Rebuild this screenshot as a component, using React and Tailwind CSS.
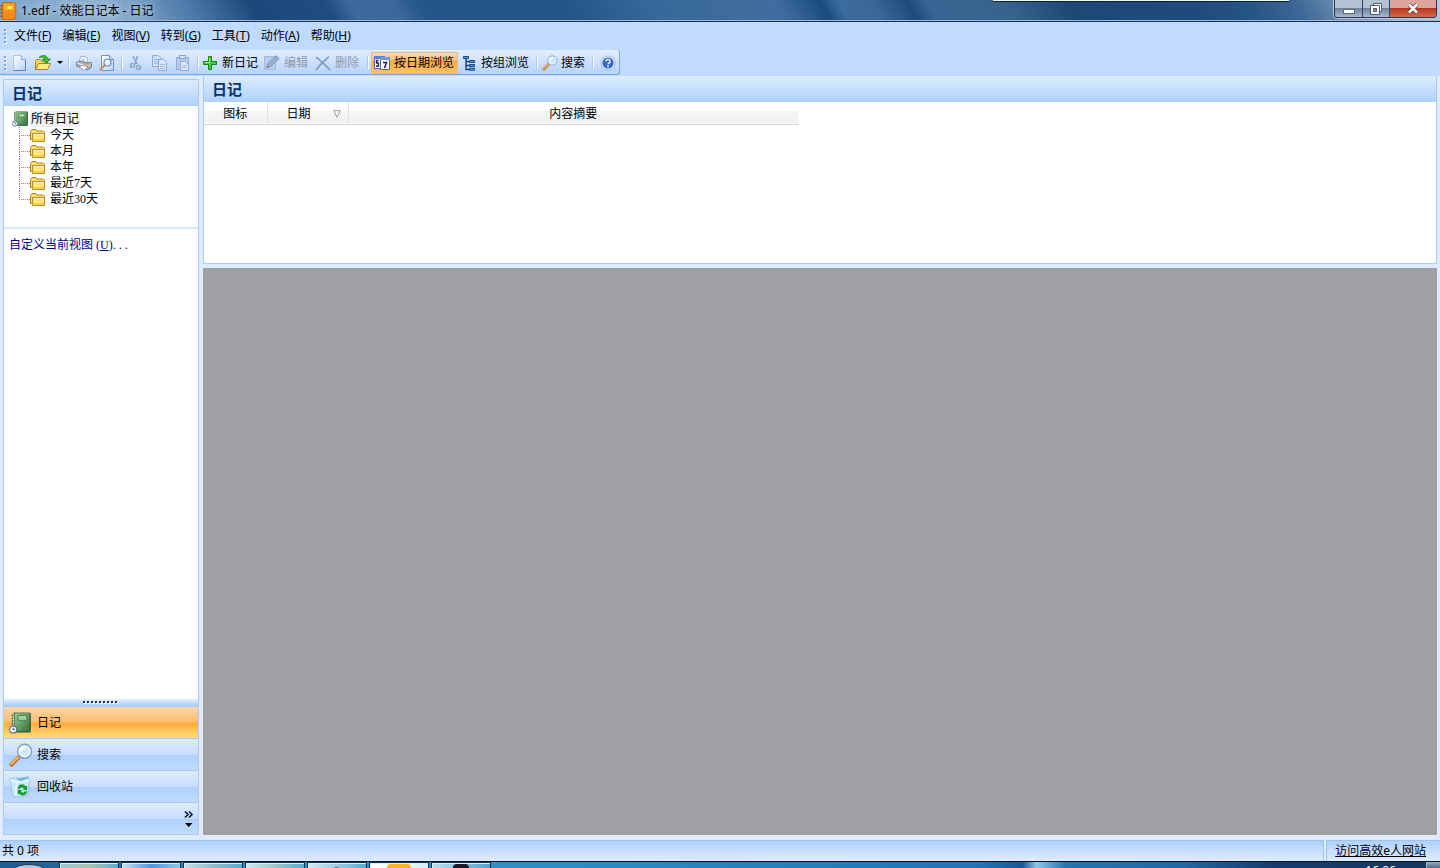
import React from "react";

const sans = "font-['Noto_Sans','Noto_Sans_CJK_SC',sans-serif]";
const serifDigits = "font-['Liberation_Serif','Noto_Sans_CJK_SC',serif]";

function Svg({ size = 16, children, className = "" }) {
  return (
    <svg width={size} height={size} viewBox="0 0 16 16" aria-hidden="true" className={`shrink-0 ${className}`}>
      {children}
    </svg>
  );
}

const NewIcon = () => (
  <Svg>
    <defs>
      <linearGradient id="pg" x1="0" y1="0" x2="1" y2="1">
        <stop offset="0" stopColor="#fff" />
        <stop offset="1" stopColor="#b4d2f5" />
      </linearGradient>
    </defs>
    <path d="M1.500 .5h8l4 4v11h-12z" fill="url(#pg)" stroke="#b0c6e6" />
    <path d="M9.500 .5v4h4" fill="#cfe2fb" stroke="#8ea8cf" />
    <path d="M1.500 15.500h12V5" fill="none" stroke="#6680ae" />
  </Svg>
);

const OpenIcon = () => (
  <Svg>
    <path d="M.5 14.500V5.500l1-1h4l1 1.500h6v3" fill="#f3d46a" stroke="#a98420" />
    <path d="M.5 14.500l3-6h12l-3 6z" fill="#ffe792" stroke="#a98420" />
    <path d="M4 2.500C7-.5 12-.3 13 4h2.500L11 8.500 7.500 4.500h2.300C9 2.300 6.500 1.800 4 2.500z" fill="#3fbe2d" stroke="#167a12" strokeWidth=".7" />
  </Svg>
);

const PrintIcon = () => (
  <Svg>
    <path d="M3 7l2-6 6 1.500L12 8z" fill="#fff" stroke="#8b99b4" strokeWidth=".8" />
    <path d="M5.500 4l4 1M5 5.500l4 1" stroke="#9aaac2" strokeWidth=".8" />
    <path d="M.5 7.500L4 6l8 2 3.500-.5v4.500l-4 3-11-4z" fill="#aeb3c0" stroke="#666b7a" strokeWidth=".8" />
    <path d="M1 8l10.500 3.500L15 8.500" fill="none" stroke="#f4f6fa" />
    <path d="M3 12l4-2 5 2-4 3.500z" fill="#fff" stroke="#7c8393" strokeWidth=".8" />
    <path d="M12 9.500h2" stroke="#f2a93c" strokeWidth="1.500" />
  </Svg>
);

const PreviewIcon = () => (
  <Svg>
    <path d="M2.500 .5h8l4 4v11h-12z" fill="url(#pg)" stroke="#7790bd" />
    <path d="M10.500 .5v4h4" fill="#c9ddf9" stroke="#7790bd" />
    <path d="M6 10L1.500 14.500" stroke="#d98a48" strokeWidth="2" strokeLinecap="round" />
    <circle cx="8.500" cy="7.500" r="3.500" fill="#e7f6ff" stroke="#5f83bb" strokeWidth="1.200" />
  </Svg>
);

const CutIcon = () => (
  <Svg>
    <path d="M4 1l4 8M8.500 1L6 9" stroke="#8aa3cc" strokeWidth="1.500" fill="none" />
    <circle cx="3.500" cy="10.500" r="2" fill="none" stroke="#8fa6cb" strokeWidth="1.500" />
    <circle cx="9.500" cy="12.500" r="2" fill="none" stroke="#8fa6cb" strokeWidth="1.500" />
  </Svg>
);

const CopyIcon = () => (
  <Svg>
    <path d="M.5 .5h6l3 3v8h-9z" fill="#cfe0fa" stroke="#93abd2" />
    <path d="M2 4.500h5M2 6.500h5M2 8.500h4" stroke="#a5badb" />
    <path d="M6.500 4.500h5l3 3v8h-8z" fill="#d7e6fc" stroke="#93abd2" />
    <path d="M8 9.500h5M8 11.500h5M8 13.500h5" stroke="#a5badb" />
  </Svg>
);

const PasteIcon = () => (
  <Svg>
    <path d="M1.500 2.500h12v12h-12z" fill="#b5cbed" stroke="#93abd2" />
    <path d="M4.500 .5h6v3h-6z" fill="#d5e4fa" stroke="#8ba3ca" />
    <path d="M5.500 6.500h5l3 3v6h-8z" fill="#dce9fd" stroke="#93abd2" />
    <path d="M7 10.500h5M7 12.500h5" stroke="#a5badb" />
  </Svg>
);

const PlusIcon = () => (
  <Svg>
    <path d="M5.500 1.500h3v5h5v3h-5v5h-3v-5h-5v-3h5z" fill="#43cf35" stroke="#11830f" strokeLinejoin="round" />
    <path d="M6.500 3v4.500H2" fill="none" stroke="#a0f090" />
  </Svg>
);

const EditIcon = () => (
  <Svg>
    <path d="M.5 1.500h11v13H.5z" fill="#b7cbea" stroke="#a5badb" />
    <path d="M2.500 12.500l1.500-4L12 .8 15.200 3.500 7 11z" fill="#98add0" stroke="#8097bd" />
    <path d="M2.500 12.500l3.500-1.200" stroke="#6c84ad" strokeWidth="1.300" />
  </Svg>
);

const DeleteIcon = () => (
  <Svg>
    <path d="M1.500 2.500c4 3 8 7 13 12M13.500 2C9 6 5 9.500 1.500 14.500" stroke="#8499c0" strokeWidth="1.600" fill="none" strokeLinecap="round" />
  </Svg>
);

const DateIcon = () => (
  <Svg>
    <path d="M.5 1.500h10v12H.5z" fill="#fff" stroke="#4a64a8" />
    <path d="M0 1h11v3H0z" fill="#5c80cc" />
    <path d="M4.500 5.500h-2v2.500h2v3h-2.500" fill="none" stroke="#1d2440" strokeWidth="1.300" />
    <path d="M6.500 2.500h9v12h-9z" fill="#f3f7ff" stroke="#4a64a8" />
    <path d="M6 2h10v3H6z" fill="#7396de" />
    <path d="M9 7.500h3.500l-2 5.500" fill="none" stroke="#1d2440" strokeWidth="1.500" />
  </Svg>
);

const GroupIcon = () => (
  <Svg>
    <path d="M4 3v11.500h4M4 6.500h4M4 10.500h4" fill="none" stroke="#17406f" strokeWidth="1.400" />
    <path d="M1.500 1.500h5v2h-5zM7.500 5.500h5v2h-5zM7.500 9.500h5v2h-5zM7.500 13.200h5v2h-5z" fill="#5b9be0" stroke="#174a84" />
  </Svg>
);

const SearchIcon = ({ size = 16 }) => (
  <Svg size={size}>
    <path d="M6.200 9.800L1.700 14.300" stroke="#b4743a" strokeWidth="2.800" strokeLinecap="round" />
    <path d="M6 9.600L1.500 14" stroke="#f3ad62" strokeWidth="1.600" strokeLinecap="round" />
    <circle cx="10.400" cy="5.500" r="4.600" fill="#cdebff" stroke="#7f9ecb" strokeWidth="1" />
    <circle cx="10.400" cy="5.500" r="3.700" fill="none" stroke="#fff" strokeWidth=".7" />
    <path d="M8 5.500a2.600 2.600 0 0 1 3-2.600" fill="none" stroke="#fff" strokeWidth="1.200" />
  </Svg>
);

const HelpIcon = () => (
  <Svg>
    <circle cx="8" cy="8" r="7" fill="#eef4ff" stroke="#a6b6d4" />
    <circle cx="8" cy="8" r="5.600" fill="#3568c4" />
    <path d="M6 6.500a2 2 0 1 1 3 1.600c-.8.500-1 .8-1 1.400" fill="none" stroke="#fff" strokeWidth="1.400" />
    <circle cx="8" cy="11.300" r=".9" fill="#fff" />
  </Svg>
);

const BookIcon = ({ size = 16 }) => (
  <Svg size={size}>
    <defs>
      <linearGradient id="bk" x1="0" y1="0" x2="1" y2="1">
        <stop offset="0" stopColor="#9bcf98" />
        <stop offset="1" stopColor="#2f7038" />
      </linearGradient>
    </defs>
    <path d="M2.500 1.500L4.500.500v13l-2 1z" fill="#e4efe4" stroke="#628b64" strokeWidth=".6" />
    <path d="M4 .7h11.300v13.600H4z" fill="url(#bk)" stroke="#47774c" strokeWidth=".6" />
    <path d="M15.400 1v13.500H4.500" fill="none" stroke="#24502b" strokeWidth=".7" />
    <path d="M6.500 2.500h6.500v3.500H6.500z" fill="#a5d39d" stroke="#3c7a42" strokeWidth=".6" />
    <path d="M2 2.500h1.500M2 4.500h1.500M2 6.500h1.500M2 8.500h1.500" stroke="#45654a" strokeWidth=".7" />
    <circle cx="3" cy="12.700" r="2.600" fill="#f2f5fa" stroke="#596989" strokeWidth=".8" />
    <path d="M3 11.300v1.500h1.200" fill="none" stroke="#303a55" strokeWidth=".7" />
  </Svg>
);

const FolderIcon = () => (
  <Svg>
    <path d="M.5 12.500V4.500l1.500-2h4l1 1.500h6.500l1 1.500v7z" fill="#f8dc7c" stroke="#a97e16" />
    <path d="M2.500 14.500v-8h12v8z" fill="#ffe584" stroke="#bd8f1d" />
    <path d="M3.500 7.500h10" stroke="#fff6c8" />
    <path d="M3 12h11v2H3z" fill="#f7cf55" />
  </Svg>
);

const BinIcon = ({ size = 16 }) => (
  <Svg size={size}>
    <path d="M.5 2L6 1.300l2.500.4L14 .4l-.3 1.800 1.500.6-1.700 11.500-8.800 1-2-1.500z" fill="#c9eaf8" stroke="#8cc3df" strokeWidth=".6" />
    <path d="M5 2l4 2 5-2.700L13.700.6z" fill="#74b7e7" />
    <path d="M1 2.800l4.500 1.700 9.500-1.300M5.500 4.500l-.5 10" fill="none" stroke="#f5fcff" strokeWidth=".8" />
    <path d="M6.300 9.200c.2-3.600 4.500-4 5.900-1.600l1.100-.7-.2 3.600-3.400-.8 1.100-.7c-1-1-2.400-.9-2.800.4z" fill="#169d2f" />
    <path d="M13.200 11.200c-.4 3.400-4.600 3.700-5.900 1.500l-1.100.7.2-3.600 3.400.8-1.100.7c.9 1.100 2.300 1.100 2.800-.2z" fill="#169d2f" />
  </Svg>
);

const AppIcon = () => (
  <Svg size={18}>
    <rect x="1.500" y=".5" width="12.500" height="15" rx="2" fill="#f58a16" stroke="#c75a0b" strokeWidth=".7" />
    <path d="M3.500 1.500h9v6h-9z" fill="#ffad27" />
    <path d="M6 3h5.500v4H6z" fill="#ffe15a" stroke="#db8610" strokeWidth=".6" />
    <path d="M.2 3.500h2.500M.2 6.500h2.500M.2 9.500h2.500M.2 12.500h2.500" stroke="#8c5d37" strokeWidth="1.200" />
  </Svg>
);

const Grip = () => (
  <svg width="8" height="16" viewBox="0 0 8 16" aria-hidden="true" className="shrink-0">
    {[1, 5, 9, 13].map((y) => (
      <g key={y}>
        <rect x="5" y={y + 1} width="2" height="2" fill="#fff" />
        <rect x="4" y={y} width="2" height="2" fill="#7fa3db" />
      </g>
    ))}
  </svg>
);

const Sep = () => (
  <span className="flex w-[7px] justify-center">
    <span className="h-[13px] w-px bg-[#a9c8f2]" />
    <span className="h-[13px] w-px bg-white" />
  </span>
);

function IconButton({ label, children, disabled }) {
  return (
    <button type="button" aria-label={label} disabled={disabled} className="flex h-[22px] w-[23px] items-center justify-center">
      {children}
    </button>
  );
}

function ToolButton({ icon, children, disabled, active }) {
  const state = active
    ? "border border-[#d9bd9a] bg-[linear-gradient(#fcd9b4,#fdbf7c_35%,#fda542_40%,#fec467)] gap-1 pl-[2px] pr-[3px] mr-[2px]"
    : disabled
      ? "text-[#8f99ab] gap-1 px-[2px] mr-[3px]"
      : "gap-[3px] px-[2px] mr-[2px]";
  return (
    <button
      type="button"
      disabled={disabled}
      aria-pressed={active}
      className={`flex h-[22px] items-center whitespace-nowrap ${state}`}
    >
      {icon}
      <span>{children}</span>
    </button>
  );
}

const menus = [
  ["文件", "F"],
  ["编辑", "E"],
  ["视图", "V"],
  ["转到", "G"],
  ["工具", "T"],
  ["动作", "A"],
  ["帮助", "H"],
];

function TitleBar() {
  return (
    <header className="relative flex h-[22px] shrink-0 justify-between border-b border-[#1b2c4d] bg-[linear-gradient(60deg,#7fa5ca_0px,#8badd0_100px,#4d7aa9_170px,#1d477a_225px,#1f4d80_290px,#3d6a9e_312px,#3a679c_350px,#25558a_372px,#255689_500px,#386899_570px,#3f6d9f_680px,#1c4b7e_720px,#3c6b9d_735px,#3a6798_765px,#1d4b7b_795px,#376492_812px,#38638f_880px,#1d4976_930px,#1d4b7d_1040px,#265684_1090px,#3c6796_1130px,#6e8fb2_1170px,#b5c8dc_1250px)] shadow-[inset_0_-1px_0_#a5bcd6]">
      <h1 className="flex items-center gap-[3px] font-normal">
        <AppIcon />
        <span className="[text-shadow:0_0_6px_#c5d8eb,0_0_10px_#c5d8eb]">1.edf - 效能日记本 - 日记</span>
      </h1>
      <div className="absolute top-0 right-[151px] h-[2px] w-[296px] border-b border-[#12222c] bg-[#eaf6fb]" />
      <div className="mr-[3px] flex h-[18px] overflow-hidden rounded-b-[4px] border border-t-0 border-[#25364e] shadow-[0_0_0_1px_#b9cadd]">
        <button type="button" aria-label="最小化" className="flex w-7 items-center justify-center border-r border-[#34465f] bg-linear-to-b from-[#b4c2d3] from-45% via-[#6c7f99] via-46% to-[#a9bbd0]">
          <svg width="12" height="14" viewBox="0 0 12 14" aria-hidden="true">
            <rect x=".5" y="7.500" width="11" height="4" fill="#fff" stroke="#5a6980" />
          </svg>
        </button>
        <button type="button" aria-label="还原" className="flex w-[27px] items-center justify-center border-r border-[#34465f] bg-linear-to-b from-[#b4c2d3] from-45% via-[#6c7f99] via-46% to-[#a9bbd0]">
          <svg width="12" height="12" viewBox="0 0 12 12" aria-hidden="true">
            <path d="M3.500 .5h8v8h-8z" fill="#fff" stroke="#4c5a6e" />
            <path d="M.5 2.500h9v9h-9z" fill="#fff" stroke="#4c5a6e" />
            <path d="M3.500 5.500h3v3h-3z" fill="#8392a8" stroke="#4c5a6e" />
          </svg>
        </button>
        <button type="button" aria-label="关闭" className="flex w-[46px] items-center justify-center bg-linear-to-b from-[#dda59d] from-45% via-[#b9321c] via-46% to-[#d3694c]">
          <svg width="12" height="11" viewBox="0 0 12 11" aria-hidden="true">
            <path d="M2 1.500l8 8M10 1.500l-8 8" stroke="#5b3438" strokeWidth="4" />
            <path d="M2 1.500l8 8M10 1.500l-8 8" stroke="#fff" strokeWidth="2.500" />
          </svg>
        </button>
      </div>
    </header>
  );
}

function MenuBar() {
  return (
    <nav className="flex h-7 shrink-0 items-center gap-px">
      <Grip />
      {menus.map(([name, key]) => (
        <button key={key} type="button" className="px-[5px] whitespace-nowrap">
          {name}(<u>{key}</u>)
        </button>
      ))}
    </nav>
  );
}

function Toolbar() {
  return (
    <div className="flex h-[26px] shrink-0">
      <div role="toolbar" className="flex h-[25px] items-center rounded-r-[3px] border-r border-b border-[#7ba5e0] bg-linear-to-b from-[#e2eefe] via-[#cde0fd] to-[#b5d3fb] pt-px">
        <Grip />
        <IconButton label="新建"><NewIcon /></IconButton>
        <IconButton label="打开"><OpenIcon /></IconButton>
        <button type="button" aria-label="最近文件" className="flex h-[22px] w-[11px] items-center justify-center">
          <svg width="6" height="3" viewBox="0 0 6 3" aria-hidden="true"><path d="M0 0h6L3 3z" /></svg>
        </button>
        <Sep />
        <IconButton label="打印"><PrintIcon /></IconButton>
        <IconButton label="打印预览"><PreviewIcon /></IconButton>
        <Sep />
        <IconButton label="剪切" disabled><CutIcon /></IconButton>
        <IconButton label="复制" disabled><CopyIcon /></IconButton>
        <IconButton label="粘贴" disabled><PasteIcon /></IconButton>
        <Sep />
        <ToolButton icon={<PlusIcon />}>新日记</ToolButton>
        <ToolButton icon={<EditIcon />} disabled>编辑</ToolButton>
        <ToolButton icon={<DeleteIcon />} disabled>删除</ToolButton>
        <Sep />
        <ToolButton icon={<DateIcon />} active>按日期浏览</ToolButton>
        <ToolButton icon={<GroupIcon />}>按组浏览</ToolButton>
        <Sep />
        <ToolButton icon={<SearchIcon />}>搜索</ToolButton>
        <Sep />
        <IconButton label="帮助"><HelpIcon /></IconButton>
      </div>
    </div>
  );
}

const folders = ["今天", "本月", "本年", "最近7天", "最近30天"];

function PanelTitle({ children }) {
  return (
    <h2 className="flex h-[26px] shrink-0 items-center bg-linear-to-b from-[#dfecff] to-[#aed1fd] pl-2 text-[15px] font-semibold text-[#0a326b]">
      {children}
    </h2>
  );
}

function Sidebar() {
  const nav = [
    { name: "日记", icon: <BookIcon size={22} />, active: true },
    { name: "搜索", icon: <SearchIcon size={24} /> },
    { name: "回收站", icon: <BinIcon size={22} /> },
  ];
  return (
    <aside className="mt-[3px] flex w-49 shrink-0 flex-col border border-[#a9cbef] bg-white">
      <PanelTitle>日记</PanelTitle>
      <div className={`h-[123px] shrink-0 border-b-2 border-[#d9e8f9] pt-[5px] pl-2 leading-4 ${serifDigits}`}>
        <a href="#all" className="flex h-4 w-fit items-center gap-[2px]">
          <BookIcon />
          <span className="bg-[#f0f0f0] px-px">所有日记</span>
        </a>
        <ul className="pl-[7px]">
          {folders.map((name, i) => (
            <li key={name}>
              <a href={`#view-${i}`} className="flex h-4 w-fit items-center">
                <span className="flex h-4 w-[11px] flex-col">
                  <span className="h-[9px] border-b border-l border-dotted border-[#808080]" />
                  {i < folders.length - 1 && <span className="h-[7px] border-l border-dotted border-[#808080]" />}
                </span>
                <FolderIcon />
                <span className="pl-1">{name}</span>
              </a>
            </li>
          ))}
        </ul>
      </div>
      <div className="flex-1 pt-2 pl-[5px]">
        <a href="#customize" className={`leading-4 text-[#000080] ${serifDigits}`}>
          自定义当前视图 (<u>U</u>). . .
        </a>
      </div>
      <div className="flex h-[7px] shrink-0 items-center justify-center bg-linear-to-b from-[#e3efff] to-[#a9cdfb]">
        <svg width="36" height="3" viewBox="0 0 36 3" aria-hidden="true">
          {[0, 1, 2, 3, 4, 5, 6, 7, 8].map((n) => (
            <g key={n}>
              <rect x={n * 4 + 1} y="1" width="2" height="2" fill="#fff" />
              <rect x={n * 4} y="0" width="2" height="2" fill="#22304a" />
            </g>
          ))}
        </svg>
      </div>
      <nav className="shrink-0">
        {nav.map(({ name, icon, active }) => (
          <button
            key={name}
            type="button"
            className={`flex h-8 w-full items-center gap-[3px] border-t border-[#a5c8f4] pl-[5px] ${
              active
                ? "bg-[linear-gradient(#fed5aa,#fdbd70_48%,#fda93e_52%,#fee07c)]"
                : "bg-[linear-gradient(#dfecff,#c6dcff_50%,#aed0fc_52%,#bfdbff)]"
            }`}
          >
            <span className="flex w-[25px] items-center">{icon}</span>
            {name}
          </button>
        ))}
        <div className="flex h-8 items-center justify-end border-t border-[#a5c8f4] bg-[linear-gradient(#dfecff,#c6dcff_50%,#aed0fc_52%,#bfdbff)] pr-1">
          <button type="button" aria-label="配置按钮">
            <svg width="10" height="18" viewBox="0 0 10 18" aria-hidden="true">
              <path d="M1 1.500l3 3-3 3M5 1.500l3 3-3 3" fill="none" stroke="#111827" strokeWidth="1.600" />
              <path d="M1 13h7.500L4.700 17z" />
            </svg>
          </button>
        </div>
      </nav>
    </aside>
  );
}

function MainArea() {
  return (
    <main className="flex min-w-0 flex-1 flex-col">
      <section className="flex h-[188px] shrink-0 flex-col border border-t-0 border-[#a9cbef] bg-white">
        <PanelTitle>日记</PanelTitle>
        <table className="w-[594px] table-fixed border-collapse">
          <thead>
            <tr className="h-[22px] border-b border-[#d0d2d5] bg-linear-to-b from-white from-40% via-[#f4f6f8] via-45% to-[#eff0f2]">
              <th scope="col" className="w-[63px] border-r border-[#e0e2e6] p-0 pt-[2px] font-normal">图标</th>
              <th scope="col" className="w-[81px] border-r border-[#e0e2e6] p-0 pt-[2px] font-normal">
                <span className="flex items-center justify-between pr-[7px] pl-[19px]">
                  日期
                  <svg width="8" height="8" viewBox="0 0 8 8" aria-hidden="true">
                    <path d="M.7 .7h6.600L4 7.200z" fill="#fff" stroke="#8b8f96" strokeWidth=".9" />
                  </svg>
                </span>
              </th>
              <th scope="col" className="p-0 pt-[2px] font-normal">内容摘要</th>
            </tr>
          </thead>
        </table>
      </section>
      <section aria-label="日记内容" className="mt-1 flex-1 bg-[#a09fa3]" />
    </main>
  );
}

function Taskbar() {
  const tile = "w-[60px] border border-b-0 border-[#0e3450] shadow-[inset_1px_1px_0_#d9f0f8]";
  return (
    <footer className="flex h-[7px] shrink-0 justify-between overflow-hidden border-t border-[#06121f] bg-[linear-gradient(90deg,#1d5c92,#3b94c8_20%,#2d8bc8_40%,#1f74b8_68%,#17599c_71%,#8fc4ea_72%,#2573b4_74%,#2069a8_82%,#173e70_88%,#163660)]">
      <div className="flex gap-[2px]">
        <div className="flex w-[57px] justify-center">
          <svg width="32" height="7" viewBox="0 0 32 7" aria-hidden="true">
            <path d="M0 7C6 1 26 1 32 7z" fill="#b3c8d8" stroke="#173a56" />
          </svg>
        </div>
        <div className={`${tile} bg-linear-to-r from-[#9cc8d5] via-[#a9c3ae] to-[#5aaed0]`} />
        <div className={`${tile} bg-linear-to-r from-[#c4e2f1] via-[#4d97e2] to-[#8cc8e6]`} />
        <div className={`${tile} bg-linear-to-r from-[#c3dfe7] via-[#8ebdcb] to-[#57aed2]`} />
        <div className={`${tile} bg-linear-to-r from-[#cfe8ee] via-[#9bc7cc] to-[#57aed2]`} />
        <div className={`${tile} flex justify-center bg-linear-to-r from-[#d3eaf1] to-[#57aed2]`}>
          <svg width="12" height="7" viewBox="0 0 12 7" aria-hidden="true"><path d="M1 7C3 4 9 4 11 7" fill="none" stroke="#3d5968" /></svg>
        </div>
        <div className={`${tile} flex items-end justify-center bg-linear-to-r from-white to-[#d4eff6]`}>
          <div className="h-1 w-6 rounded-t-sm bg-[#fbb419]" />
        </div>
        <div className={`${tile} flex items-end justify-center bg-linear-to-r from-[#bcdcea] to-[#4fa5d0]`}>
          <div className="h-1 w-4 rounded-t-full bg-[#1a1a2c]" />
        </div>
      </div>
      <div className="flex gap-[30px]">
        <time className="pt-[3px] leading-3 text-white">16:06</time>
        <button type="button" aria-label="显示桌面" className="w-[14px] border-l border-[#9cb2c6] bg-linear-to-b from-[#9cacbd] to-[#536a84]" />
      </div>
    </footer>
  );
}

export default function App() {
  return (
    <div className={`flex h-screen flex-col overflow-hidden bg-[#bfdbff] text-xs text-black ${sans}`}>
      <TitleBar />
      <MenuBar />
      <Toolbar />
      <div className="flex min-h-0 flex-1 gap-1 bg-[#dfecff] px-[3px] pb-[5px]">
        <Sidebar />
        <MainArea />
      </div>
      <div className="flex h-[21px] shrink-0 gap-[2px] bg-[#dfecff]">
        <div role="status" className="flex flex-1 items-center border-t border-r border-[#9fc5ea] bg-linear-to-b from-[#aed1ff] to-[#dfecff] pl-[2px]">
          共 0 项
        </div>
        <div className="flex items-center border-t border-l border-[#9fc5ea] bg-linear-to-b from-[#aed1ff] to-[#dfecff] pr-[14px] pl-2">
          <a href="#site" className="underline">访问高效e人网站</a>
        </div>
      </div>
      <Taskbar />
    </div>
  );
}
